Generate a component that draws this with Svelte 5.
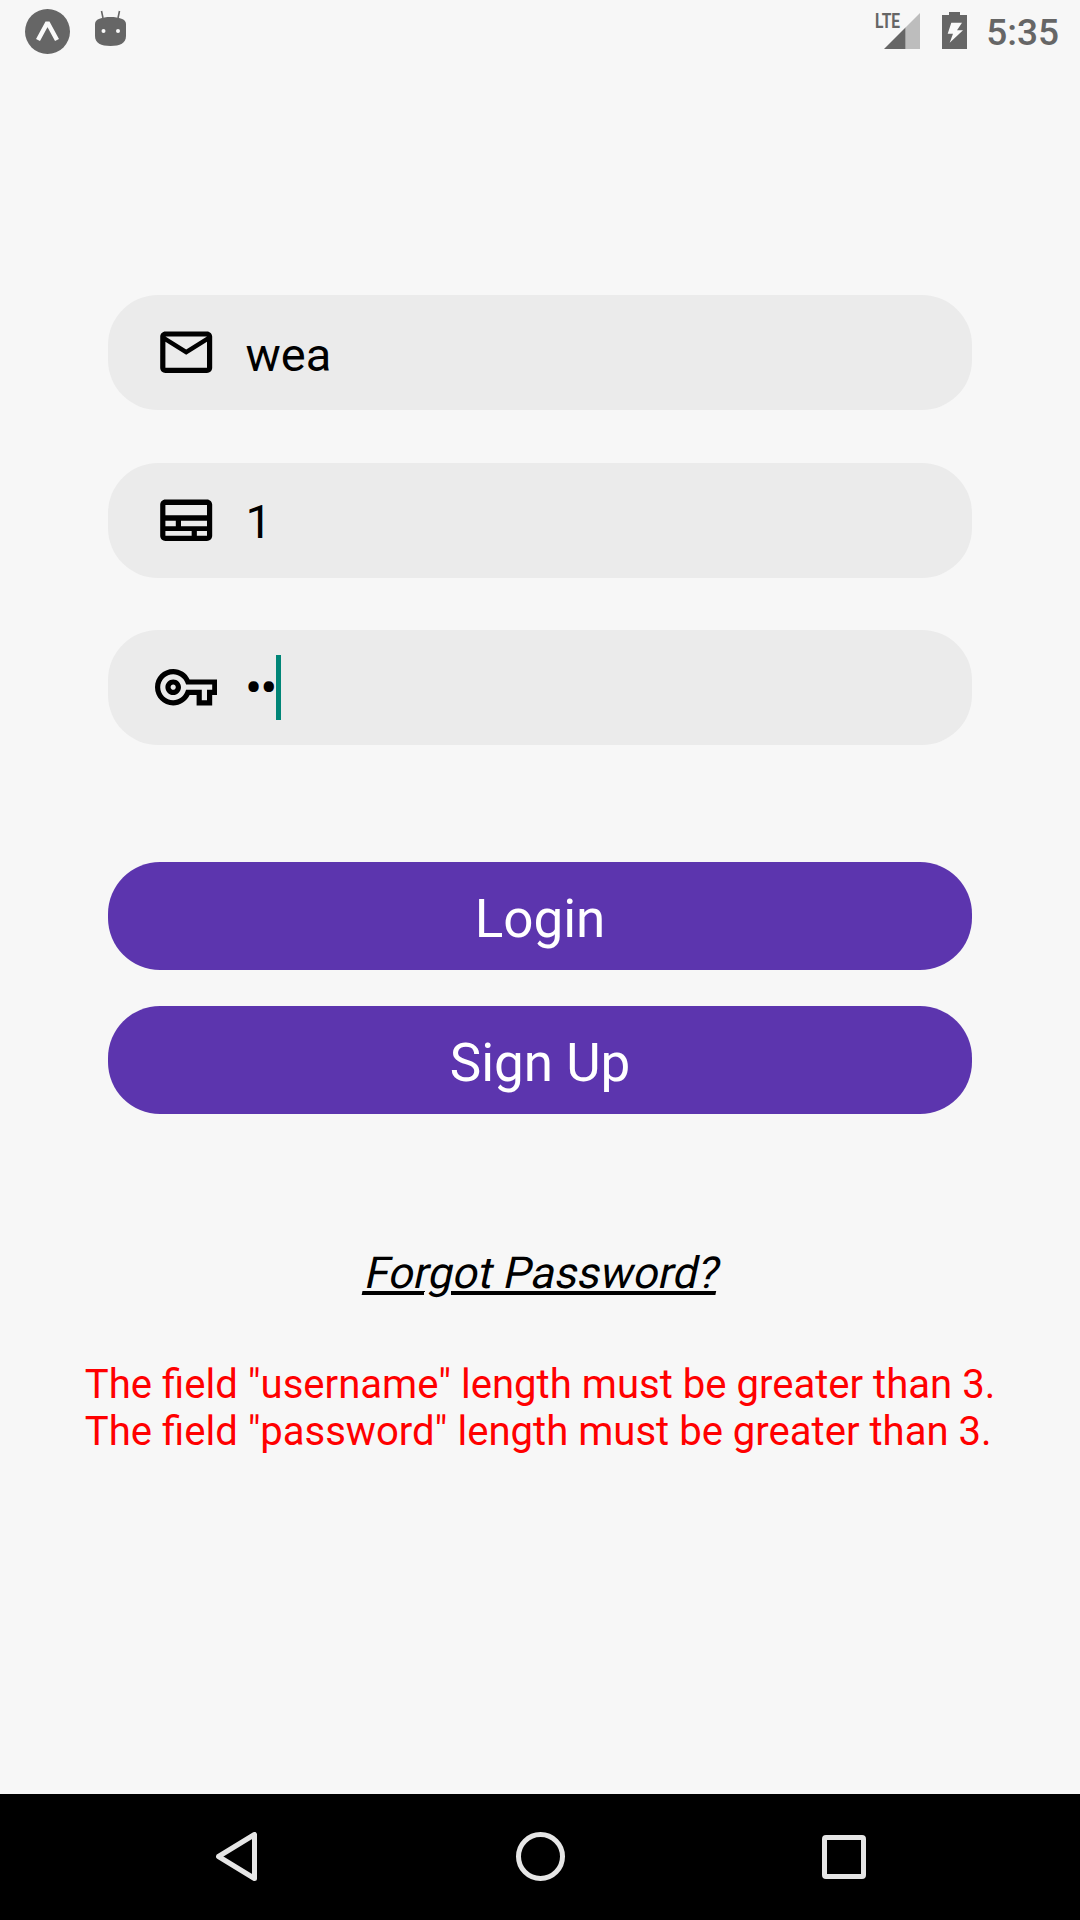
<script>
  const fields = [
    { kind: 'mail', value: 'wea' },
    { kind: 'card', value: '1' },
    { kind: 'key', value: '••', secret: true }
  ];
  const errors = [
    'The field "username" length must be greater than 3.',
    'The field "password" length must be greater than 3.'
  ];
</script>

<div class="screen">
  <header class="status">
    <div class="status-left">
      <svg class="expo" viewBox="0 0 45 45" aria-hidden="true">
        <circle cx="22.5" cy="22.5" r="22.5" fill="#666" />
        <path d="M13 31 L22.5 13.500 L32 31" fill="none" stroke="#fafafa" stroke-width="4.500" stroke-linejoin="bevel" />
      </svg>
      <svg class="droid" viewBox="0 0 31 37" aria-hidden="true">
        <path d="M6.5 1 L8 8 M24.500 1 L23 8" stroke="#666" stroke-width="1.600" fill="none" />
        <path d="M0 14 C0 9 7 7 15.500 7 C24 7 31 9 31 14 L31 26 C31 33 25 36 15.500 36 C6 36 0 33 0 26 Z" fill="#666" />
        <circle cx="8.500" cy="21" r="2" fill="#fafafa" />
        <circle cx="23" cy="21" r="2" fill="#fafafa" />
      </svg>
    </div>
    <div class="status-right">
      <div class="signal">
        <span class="lte">LTE</span>
        <svg viewBox="0 0 36 36" aria-hidden="true">
          <path d="M36 0 V36 H21.500 V14.500 Z" fill="#bdbdbd" />
          <path d="M21.500 14.500 V36 H0 Z" fill="#666" />
        </svg>
      </div>
      <svg class="battery" viewBox="0 0 25 37" aria-hidden="true">
        <path d="M7 0 H18 V3 H25 V37 H0 V3 H7 Z" fill="#666" />
        <path d="M9.300 10.700 H20 L15 18.300 H21 L7.700 30.700 L11 21.700 H5.700 Z" fill="#fafafa" />
      </svg>
      <span class="time">5:35</span>
    </div>
  </header>

  <main class="content">
    <div class="fields">
      {#each fields as f}
        <div class="field">
          <span class="icon">
            {#if f.kind === 'mail'}
              <svg viewBox="0 0 24 24" aria-hidden="true"><path d="M20 4H4c-1.100 0-1.990.9-1.990 2L2 18c0 1.100.9 2 2 2h16c1.100 0 2-.9 2-2V6c0-1.100-.9-2-2-2zm0 14H4V8l8 5 8-5v10zm-8-7L4 6h16l-8 5z" /></svg>
            {:else if f.kind === 'card'}
              <svg viewBox="0 0 24 24" aria-hidden="true"><path fill-rule="evenodd" d="M4 4H20C21.100 4 22 4.900 22 6V18C22 19.100 21.100 20 20 20H4C2.900 20 2 19.100 2 18V6C2 4.900 2.900 4 4 4ZM4 6.200V10.100H20V6.200ZM4 12.200V14.300H8V12.200ZM10 12.200V14.300H20V12.200ZM4 16.200V18H14.100V16.200ZM16.100 16.200V18H20V16.200Z" /></svg>
            {:else}
              <svg viewBox="0 0 24 24" aria-hidden="true"><path d="M22 19h-6v-4h-2.680c-1.140 2.420-3.600 4-6.320 4-3.860 0-7-3.140-7-7s3.140-7 7-7c2.720 0 5.170 1.580 6.320 4H24v6h-2v4zm-4-2h2v-4h2v-2H11.940l-.23-.67C11.010 8.340 9.110 7 7 7c-2.760 0-5 2.240-5 5s2.240 5 5 5c2.110 0 4.010-1.340 4.710-3.330l.23-.67H18v4zM7 15c-1.650 0-3-1.350-3-3s1.350-3 3-3 3 1.350 3 3-1.350 3-3 3zm0-4c-.55 0-1 .45-1 1s.45 1 1 1 1-.45 1-1-.45-1-1-1z" /></svg>
            {/if}
          </span>
          <span class="value" class:secret={f.secret}>{f.value}</span>
          {#if f.secret}<span class="caret"></span>{/if}
        </div>
      {/each}
    </div>

    <div class="actions">
      <button class="btn">Login</button>
      <button class="btn">Sign Up</button>
    </div>

    <a class="forgot" href="#forgot">Forgot Password?</a>

    <div class="errors">
      {#each errors as e}
        <p>{e}</p>
      {/each}
    </div>
  </main>

  <nav class="nav">
    <svg class="back" viewBox="0 0 41 49" aria-hidden="true">
      <path d="M38.500 2.500 V46.500 L2.500 24.500 Z" fill="none" stroke="#e6e6e6" stroke-width="5" stroke-linejoin="round" />
    </svg>
    <svg class="home" viewBox="0 0 49 49" aria-hidden="true">
      <circle cx="24.500" cy="24.500" r="22" fill="none" stroke="#e6e6e6" stroke-width="5" />
    </svg>
    <svg class="recent" viewBox="0 0 44 44" aria-hidden="true">
      <rect x="2.500" y="2.500" width="39" height="39" rx="1.500" fill="none" stroke="#e6e6e6" stroke-width="5" />
    </svg>
  </nav>
</div>

<style>
  :global(body) {
    background: #f7f7f7;
  }
  .screen {
    width: 1080px;
    height: 1920px;
    display: flex;
    flex-direction: column;
    background: #f7f7f7;
    font-family: Roboto, sans-serif;
    color: #000;
    overflow: hidden;
  }
  .status {
    height: 72px;
    flex: none;
    display: flex;
    justify-content: space-between;
    align-items: flex-start;
  }
  .status-left {
    display: flex;
    align-items: flex-start;
    padding-left: 25px;
    padding-top: 9px;
  }
  .expo {
    width: 45px;
    height: 45px;
  }
  .droid {
    width: 31px;
    height: 37px;
    margin-left: 25px;
    margin-top: 1px;
  }
  .status-right {
    display: flex;
    align-items: flex-start;
    padding-right: 21px;
    padding-top: 12px;
  }
  .signal {
    position: relative;
    width: 46px;
    height: 37px;
    margin-top: 1px;
  }
  .signal svg {
    position: absolute;
    right: 0;
    top: 0;
    width: 36px;
    height: 36px;
  }
  .lte {
    position: absolute;
    left: 1px;
    top: 1px;
    font-weight: 700;
    font-size: 21px;
    line-height: 15px;
    color: #666;
    transform: scaleX(0.74);
    transform-origin: left top;
  }
  .battery {
    width: 25px;
    height: 37px;
    margin-left: 22px;
  }
  .time {
    font-size: 37px;
    font-weight: 500;
    line-height: 38px;
    color: #666;
    margin-left: 19px;
    margin-top: 2px;
  }
  .content {
    flex: 1;
    display: flex;
    flex-direction: column;
    padding: 223px 108px 0;
    min-height: 0;
  }
  .fields {
    display: flex;
    flex-direction: column;
    gap: 52.500px;
  }
  .field {
    height: 115px;
    background: #ebebeb;
    border-radius: 50px;
    display: flex;
    align-items: center;
    padding-left: 47px;
  }
  .icon {
    width: 62.400px;
    height: 62.400px;
    flex: none;
  }
  .icon svg {
    display: block;
    width: 100%;
    height: 100%;
    fill: #000;
  }
  .value {
    font-size: 47px;
    margin-left: 28px;
    padding-top: 3px;
  }
  .secret {
    font-size: 44px;
    font-weight: 700;
    letter-spacing: -0.5px;
    padding-top: 0;
  }
  .caret {
    width: 5px;
    height: 65px;
    background: #008577;
  }
  .actions {
    display: flex;
    flex-direction: column;
    gap: 36px;
    margin-top: 117px;
  }
  .btn {
    height: 108px;
    border: none;
    border-radius: 52px;
    background: #5c35ae;
    color: #fff;
    font-family: inherit;
    font-size: 53px;
    padding: 5px 0 0;
  }
  .forgot {
    align-self: center;
    margin-top: 133px;
    font-size: 44px;
    text-decoration: underline;
    color: #000;
    transform: skewX(-12deg);
    transform-origin: 50% 80%;
  }
  .errors {
    align-self: center;
    margin: 62px -40px 0;
    text-align: left;
    color: #f00;
    font-size: 40.100px;
    line-height: 47px;
  }
  .errors p {
    margin: 0;
    white-space: nowrap;
  }
  .nav {
    height: 126px;
    flex: none;
    background: #000;
    position: relative;
    display: block;
  }
  .nav svg {
    position: absolute;
    top: 38px;
  }
  .back {
    left: 216px;
    width: 41px;
    height: 49px;
  }
  .home {
    left: 516px;
    width: 49px;
    height: 49px;
  }
  .recent {
    left: 822px;
    width: 44px;
    height: 44px;
  }
  .nav .recent {
    top: 41px;
  }
</style>
